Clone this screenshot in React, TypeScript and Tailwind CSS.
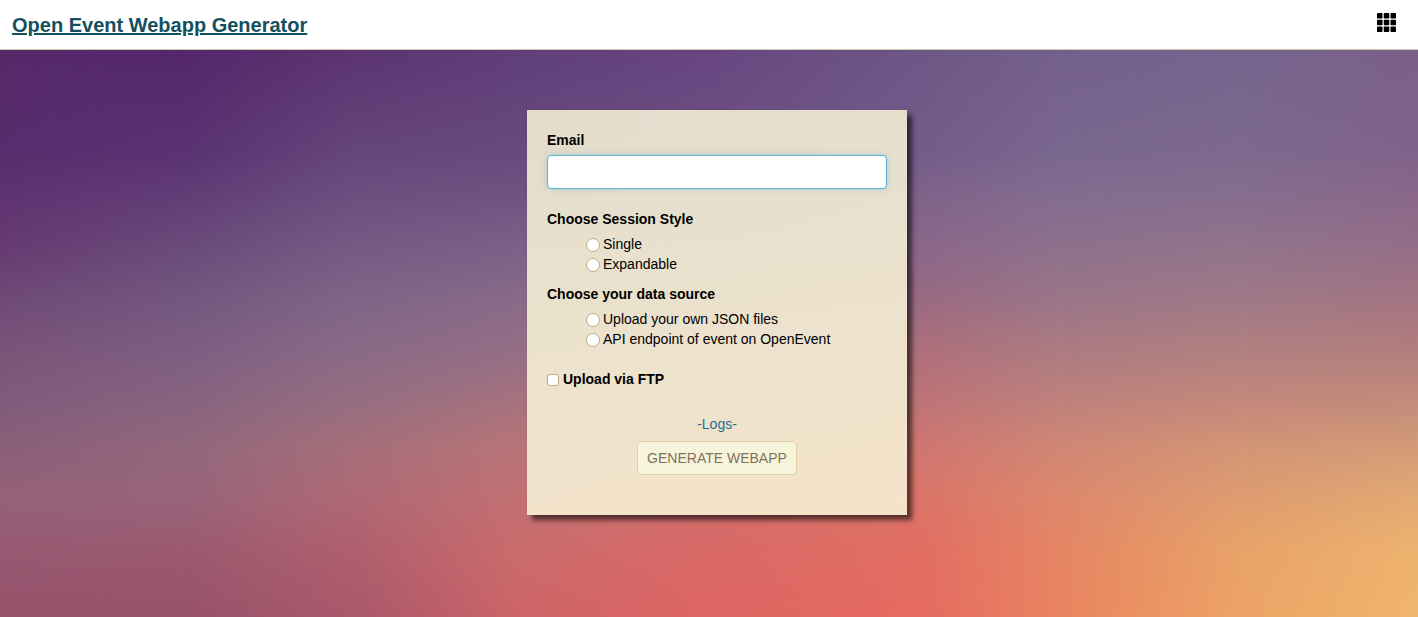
import React from "react";

const BACKDROP_COLUMNS = [
  "bg-[linear-gradient(to_bottom,#56296a_0%,#592c6d_18%,#603371_26%,#673b72_35%,#6f4a78_44%,#7a5478_53%,#805b7c_62%,#8b5f79_70%,#946278_79%,#965a72_88%,#96526b_100%)]",
  "bg-[linear-gradient(to_bottom,#54276a_0%,#5a3272_18%,#623e76_26%,#6a4b7b_35%,#73577f_44%,#7d5e82_53%,#88637f_62%,#92677c_70%,#98647a_79%,#9a5a70_88%,#97526a_100%)] mask-[linear-gradient(to_right,transparent_0%,black_13%)]",
  "bg-[linear-gradient(to_bottom,#5c3471_0%,#65467a_18%,#6b5080_26%,#745b84_35%,#7f6587_44%,#8a6a86_53%,#966e81_62%,#a56e7a_70%,#ae6975_79%,#af5f6e_88%,#aa586b_100%)] mask-[linear-gradient(to_right,transparent_13%,black_25%)]",
  "bg-[linear-gradient(to_bottom,#603f7a_0%,#684a7d_18%,#6f5482_26%,#7b6188_35%,#896a88_44%,#956e86_53%,#a6727e_62%,#b77578_70%,#c27072_79%,#cb6c6c_88%,#ce6467_100%)] mask-[linear-gradient(to_right,transparent_25%,black_37%)]",
  "bg-[linear-gradient(to_bottom,#684680_0%,#6c5083_18%,#745986_26%,#806288_35%,#8e6886_44%,#9f6c82_53%,#b2707a_62%,#c37374_70%,#d0706e_79%,#d96967_88%,#df6563_100%)] mask-[linear-gradient(to_right,transparent_37%,black_50%)]",
  "bg-[linear-gradient(to_bottom,#6d5786_0%,#745c8a_18%,#80638a_26%,#8c678a_35%,#9a6a82_44%,#ae707c_53%,#be7477_62%,#cf7671_70%,#db7469_79%,#e26e63_88%,#e66b61_100%)] mask-[linear-gradient(to_right,transparent_50%,black_65%)]",
  "bg-[linear-gradient(to_bottom,#74608c_0%,#7a678f_18%,#836d90_26%,#8e718c_35%,#9b7588_44%,#ac7b82_53%,#be817c_62%,#d08775_70%,#dd886d_79%,#e58664_88%,#ea8560_100%)] mask-[linear-gradient(to_right,transparent_65%,black_75%)]",
  "bg-[linear-gradient(to_bottom,#76648e_0%,#7d698e_18%,#866e8e_26%,#92748b_35%,#a07987_44%,#b08080_53%,#c3887b_62%,#d29576_70%,#de9d70_79%,#e8a369_88%,#eda466_100%)] mask-[linear-gradient(to_right,transparent_75%,black_88%)]",
  "bg-[linear-gradient(to_bottom,#7a6088_0%,#80628a_18%,#8a6789_26%,#956e88_35%,#a37482_44%,#b27d7e_53%,#c28b7b_62%,#d29b78_70%,#e1a973_79%,#edb26f_88%,#efb56e_100%)] mask-[linear-gradient(to_right,transparent_88%,black_100%)]",
];

function Backdrop() {
  return (
    <div aria-hidden="true" className="absolute inset-0 -z-10">
      {BACKDROP_COLUMNS.map((column) => (
        <div key={column} className={`absolute inset-0 ${column}`} />
      ))}
    </div>
  );
}

function GridIcon() {
  const cells = [0, 6.75, 13.5];
  return (
    <svg viewBox="0 0 19 19" className="size-[19px]" aria-hidden="true">
      {cells.map((y) =>
        cells.map((x) => (
          <rect key={`${x}-${y}`} x={x} y={y} width="5.5" height="5.5" rx="0.7" />
        )),
      )}
    </svg>
  );
}

function Choices({ legend, name, options }: { legend: string; name: string; options: string[] }) {
  return (
    <fieldset className="mb-[10px]">
      <legend className="mb-[5px] font-bold">{legend}</legend>
      <div className="pl-10">
        {options.map((option) => (
          <label key={option} className="flex items-center gap-[3px]">
            <input
              type="radio"
              name={name}
              className="mt-0.5 -ml-px size-[14px] appearance-none rounded-full border border-[#b9ae84] bg-white checked:border-4 checked:border-[#337ab7]"
            />
            {option}
          </label>
        ))}
      </div>
    </fieldset>
  );
}

export default function App() {
  return (
    <div className="flex min-h-screen flex-col font-['Liberation_Sans',Arial,sans-serif] text-sm leading-5 text-black">
      <header className="flex h-[50px] items-center justify-between border-b border-[#cfc6ae] bg-white pr-[22px] pl-3">
        <a href="#" className="text-xl font-bold text-[#14505f] underline">
          Open Event Webapp Generator
        </a>
        <button type="button" aria-label="Open menu" className="pb-1">
          <GridIcon />
        </button>
      </header>
      <main className="relative isolate flex flex-1 items-start justify-center pt-15 pb-12 pl-4">
        <Backdrop />
        <form
          className="w-[380px] bg-[#f8f3d8]/87 p-5 pb-10 shadow-[5px_5px_5px_rgba(0,0,0,0.6)]"
          onSubmit={(event) => event.preventDefault()}
        >
          <label htmlFor="email" className="mb-[5px] block font-bold">
            Email
          </label>
          <input
            id="email"
            type="email"
            className="mb-5 block h-[34px] w-full rounded border border-[#5bb0d3] bg-white px-3 shadow-[0_0_6px_rgba(102,175,203,0.45)] outline-none"
          />
          <Choices legend="Choose Session Style" name="session" options={["Single", "Expandable"]} />
          <Choices
            legend="Choose your data source"
            name="source"
            options={["Upload your own JSON files", "API endpoint of event on OpenEvent"]}
          />
          <label className="mt-5 flex items-center gap-1 font-bold">
            <input
              type="checkbox"
              className="mt-0.5 size-3 appearance-none rounded-[3px] border border-[#b9ae84] bg-white checked:bg-[#337ab7]"
            />
            Upload via FTP
          </label>
          <div className="mt-[25px] flex flex-col items-center gap-[7px]">
            <a href="#logs" className="text-[#1f6f93]">
              -Logs-
            </a>
            <button
              type="submit"
              disabled
              className="h-[34px] rounded border border-[#dfd3ac] bg-[#f7f4dc] px-[9px] text-[#7f7358]"
            >
              GENERATE WEBAPP
            </button>
          </div>
        </form>
      </main>
    </div>
  );
}
